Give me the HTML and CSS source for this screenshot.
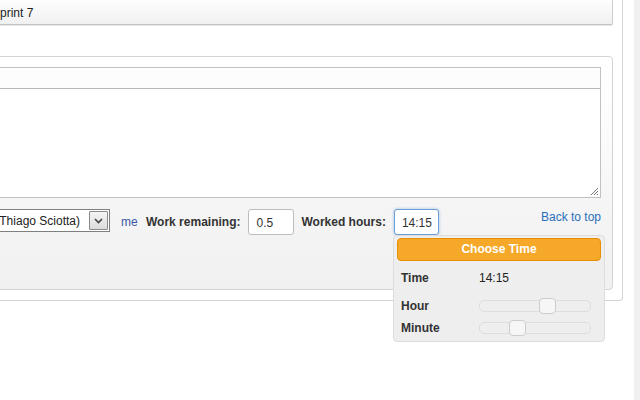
FILE: index.html
```html
<!DOCTYPE html>
<html>
<head>
<meta charset="utf-8">
<link rel="stylesheet" href="styles.css">
</head>
<body>
<div class="page">
  <div class="main">
    <div class="sprint-box">Sprint 7</div>
    <div class="work-box">
      <div class="editor">
        <div class="toolbar"></div>
        <div class="textarea">
          <svg class="grip" width="9" height="9" viewBox="0 0 9 9"><path d="M8 1L1 8M8 4L4 8M8 7L7 8" stroke="#777" stroke-width="1"/></svg>
        </div>
      </div>
      <div class="form-row">
        <div class="select">
          <span class="select-text">Assigned to (Thiago Sciotta)</span>
          <span class="select-btn"><svg width="9" height="6" viewBox="0 0 9 6"><path d="M1 1L4.5 4.5L8 1" fill="none" stroke="#444" stroke-width="1.6"/></svg></span>
        </div>
        <a class="me-link">me</a>
        <label class="lbl lbl-remaining">Work remaining:</label>
        <div class="input input-remaining">0.5</div>
        <label class="lbl lbl-worked">Worked hours:</label>
        <div class="input input-worked">14:15</div>
        <a class="back-top">Back to top</a>
      </div>
    </div>
  </div>
  <div class="scroll-strip"></div>
</div>
<div class="timepicker">
  <div class="tp-header">Choose Time</div>
  <div class="tp-row tp-time">
    <span class="tp-label">Time</span>
    <span class="tp-value">14:15</span>
  </div>
  <div class="tp-row tp-hour">
    <span class="tp-label">Hour</span>
    <div class="slider"><span class="handle handle-hour"></span></div>
  </div>
  <div class="tp-row tp-minute">
    <span class="tp-label">Minute</span>
    <div class="slider"><span class="handle handle-minute"></span></div>
  </div>
</div>
</body>
</html>
```
FILE: styles.css
```css
* { box-sizing: border-box; }
html, body {
  margin: 0;
  padding: 0;
  width: 640px;
  height: 400px;
  overflow: hidden;
  background: #fff;
  font-family: "Liberation Sans", Arial, sans-serif;
  font-size: 12px;
  color: #222;
}
body { position: relative; }
.page {
  display: flex;
  align-items: flex-start;
  min-height: 400px;
}
.main {
  margin-left: -40px;
  margin-top: -4px;
  width: 663px;
  flex: none;
  border-right: 1px solid #d4d4d4;
  border-bottom: 1px solid #d4d4d4;
  border-bottom-right-radius: 4px;
  padding-bottom: 10px;
}
.scroll-strip {
  margin-left: 11px;
  width: 6px;
  align-self: stretch;
  background: #f0f0f0;
  flex: none;
}
.sprint-box {
  margin-right: 9px;
  height: 29px;
  padding: 10px 0 0 31px;
  border: 1px solid #ccc;
  border-top: none;
  border-bottom-color: #c4c4c4;
  border-bottom-right-radius: 2px;
  background: linear-gradient(#ffffff, #f1f1f1);
  color: #222;
  box-shadow: 0 1px 0 #e6e6e6;
}
.work-box {
  margin-top: 31px;
  margin-right: 9px;
  height: 234px;
  border: 1px solid #d4d4d4;
  border-radius: 4px;
  padding: 10px 11px 0 19px;
  background: linear-gradient(#ffffff 0%, #fbfbfb 35%, #f4f4f4 70%, #f1f1f1 100%);
}
.editor {
  border: 1px solid #c2c2c2;
  border-left: none;
  background: #fff;
}
.toolbar {
  height: 21px;
  border-bottom: 1px solid #b8b8b8;
  background: #fdfdfd;
}
.textarea {
  height: 108px;
  position: relative;
  background: #fff;
}
.grip {
  position: absolute;
  right: 1px;
  bottom: 1px;
}
.form-row {
  display: flex;
  align-items: center;
  margin-top: 11px;
  height: 26px;
}
.select {
  width: 130px;
  height: 23px;
  display: flex;
  align-items: center;
  justify-content: flex-end;
  border: 1px solid #7f7f7f;
  background: #fff;
  padding-right: 1px;
  margin-top: -3px;
  flex: none;
}
.select-text {
  white-space: nowrap;
  color: #222;
  margin-right: 9px;
  font-size: 12px;
}
.select-btn {
  width: 19px;
  height: 19px;
  flex: none;
  border: 1px solid #8a8a8a;
  border-radius: 1px;
  background: linear-gradient(#f4f4f4, #dcdcdc);
  display: flex;
  align-items: center;
  justify-content: center;
}
.me-link {
  margin-left: 11px;
  color: #3b57a8;
  width: 17px;
  white-space: nowrap;
}
.lbl {
  font-weight: bold;
  color: #333;
  white-space: nowrap;
}
.lbl-remaining { margin-left: 8px; }
.lbl-worked { margin-left: 7px; }
.input {
  height: 26px;
  border: 1px solid #bdbdbd;
  border-radius: 3px;
  background: #fff;
  padding: 6px 0 0 7px;
  color: #333;
  flex: none;
}
.input-remaining {
  margin-left: 8px;
  width: 46px;
}
.input-worked {
  margin-left: 8px;
  width: 45px;
  border-color: #6a9fd8;
  box-shadow: 0 0 3px rgba(90, 150, 220, 0.6);
}
.back-top {
  margin-left: auto;
  align-self: flex-start;
  margin-top: 1px;
  color: #2a6ebb;
  white-space: nowrap;
}
.timepicker {
  position: absolute;
  left: 393px;
  top: 235px;
  width: 212px;
  height: 107px;
  background: #eeeeee;
  border: 1px solid #dddddd;
  border-radius: 4px;
  padding: 2px 3px 0 3px;
}
.tp-header {
  height: 23px;
  background: #f6a828;
  border: 1px solid #e78f08;
  border-radius: 4px;
  color: #fff;
  font-weight: bold;
  text-align: center;
  line-height: 21px;
}
.tp-row {
  display: flex;
  align-items: center;
  padding-left: 4px;
}
.tp-label {
  width: 78px;
  font-weight: bold;
  color: #333;
}
.tp-value { color: #222; }
.tp-time { margin-top: 9px; height: 16px; }
.tp-hour { margin-top: 12px; height: 16px; }
.tp-minute { margin-top: 6px; height: 16px; }
.slider {
  position: relative;
  width: 112px;
  height: 12px;
  border: 1px solid #dddddd;
  border-radius: 5px;
  background: #eeeeee;
}
.handle {
  position: absolute;
  top: -3px;
  width: 17px;
  height: 16px;
  border: 1px solid #cccccc;
  border-radius: 4px;
  background: #f6f6f6;
}
.handle-hour { left: 59px; }
.handle-minute { left: 29px; }
```
